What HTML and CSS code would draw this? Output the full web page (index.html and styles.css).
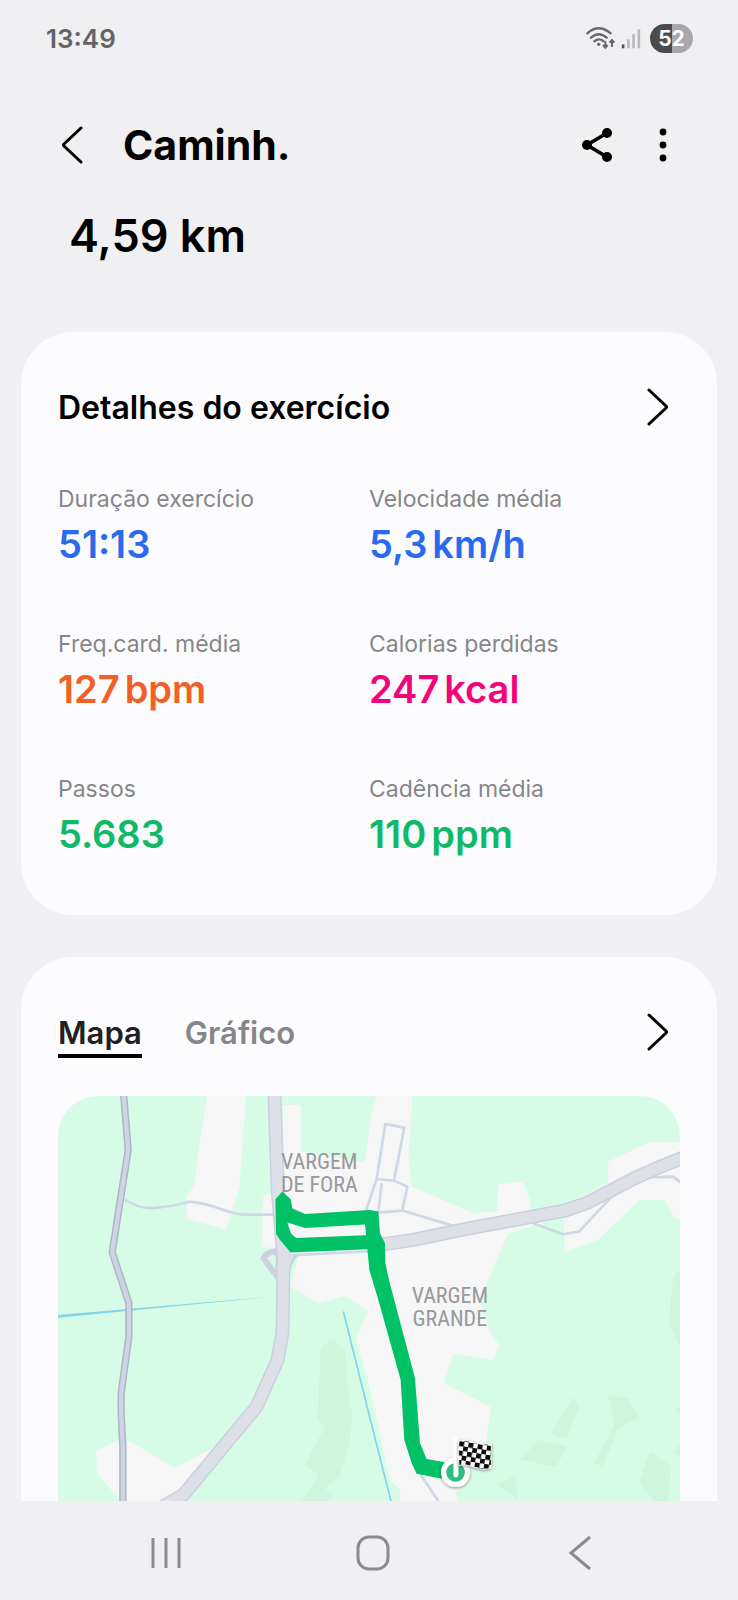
FILE: index.html
```html
<!DOCTYPE html>
<html lang="pt-BR">
<head>
<meta charset="utf-8">
<meta name="viewport" content="width=device-width, initial-scale=1">
<title>Caminh.</title>
<link rel="stylesheet" href="styles.css">
</head>
<body>
<div class="app">
  <div class="status">
    <span class="clock">13:49</span>
    <div class="status-icons">
      <svg class="wifi" viewBox="0 0 90 72" aria-hidden="true">
        <g fill="none" stroke="#69696b" stroke-width="7" stroke-linecap="round">
          <path d="M4 22Q38-8 74 22M15 35Q38 14 62 35M25 46Q38 35 52 45"/>
        </g>
        <circle cx="38" cy="55" r="5" fill="#69696b"/>
        <path d="M58 45V64M51 57L58 65L65 57M78 63V43M71 50L78 42L85 50" fill="none" stroke="#69696b" stroke-width="6"/>
      </svg>
      <svg class="signal" viewBox="0 0 60 64" aria-hidden="true">
        <path d="M6 50V62" stroke="#555557" stroke-width="8"/>
        <path d="M22 34V62M38 19V62M54 4V62" stroke="#b9b9bb" stroke-width="8"/>
      </svg>
      <span class="battery">52</span>
    </div>
  </div>

  <header class="appbar">
    <button class="icon-btn" aria-label="Voltar">
      <svg class="back-icon" viewBox="0 0 22 40" aria-hidden="true"><path d="M20 3L3 19Q2 20 3 21L20 37"/></svg>
    </button>
    <h1 class="title">Caminh.</h1>
    <button class="icon-btn" aria-label="Compartilhar">
      <svg class="share-icon" viewBox="0 0 90 102" aria-hidden="true">
        <path d="M75 15L15 51L75 87" fill="none" stroke="#000" stroke-width="11"/>
        <circle cx="75" cy="15" r="15"/><circle cx="15" cy="51" r="15"/><circle cx="75" cy="87" r="15"/>
      </svg>
    </button>
    <button class="icon-btn" aria-label="Mais opções">
      <svg class="more-icon" viewBox="0 0 8 34" aria-hidden="true"><circle cx="4" cy="4" r="3.4"/><circle cx="4" cy="17" r="3.4"/><circle cx="4" cy="30" r="3.4"/></svg>
    </button>
  </header>

  <p class="distance">4,59 km</p>

  <main class="cards">
    <section class="card">
      <div class="card-head">
        <h2 class="card-title">Detalhes do exercício</h2>
        <button class="icon-btn" aria-label="Abrir detalhes">
          <svg class="chevron" viewBox="0 0 22 40" aria-hidden="true"><path d="M2 3L19 19Q20 20 19 21L2 37"/></svg>
        </button>
      </div>
      <dl class="stats">
        <div class="stat"><dt>Duração exercício</dt><dd class="blue">51:13</dd></div>
        <div class="stat"><dt>Velocidade média</dt><dd class="blue">5,3<span class="unit">km/h</span></dd></div>
        <div class="stat"><dt>Freq.card. média</dt><dd class="orange">127<span class="unit">bpm</span></dd></div>
        <div class="stat"><dt>Calorias perdidas</dt><dd class="pink">247<span class="unit">kcal</span></dd></div>
        <div class="stat"><dt>Passos</dt><dd class="green">5.683</dd></div>
        <div class="stat"><dt>Cadência média</dt><dd class="green">110<span class="unit">ppm</span></dd></div>
      </dl>
    </section>

    <section class="card card-map">
      <div class="card-head">
        <div class="tabs" role="tablist">
          <button class="tab tab-active" role="tab" aria-selected="true">Mapa</button>
          <button class="tab" role="tab" aria-selected="false">Gráfico</button>
        </div>
        <button class="icon-btn" aria-label="Abrir mapa">
          <svg class="chevron" viewBox="0 0 22 40" aria-hidden="true"><path d="M2 3L19 19Q20 20 19 21L2 37"/></svg>
        </button>
      </div>
      <div class="map">
        <svg class="map-art" viewBox="21 18 1872 1216" preserveAspectRatio="xMidYMin slice" role="img" aria-label="Mapa do percurso">
          <defs>
            <pattern id="checks" width="28" height="28" patternUnits="userSpaceOnUse" patternTransform="translate(1229 1054) rotate(9)">
              <rect width="28" height="28" fill="#fff"/>
              <rect width="15" height="15" fill="#0a0a0a"/><rect x="14" y="14" width="15" height="15" fill="#0a0a0a"/>
            </pattern>
            <filter id="shade" x="-30%" y="-30%" width="160%" height="160%"><feDropShadow dx="0" dy="3" stdDeviation="4" flood-opacity=".45"/></filter>
          </defs>
          <rect x="21" y="18" width="1872" height="1216" fill="#d6fce7"/>
          <g fill="#cff6dd">
            <path d="M812 770L850 748L885 780L890 880L908 980L900 1050L870 1160L825 1195L850 1220L830 1234H755L805 1155L765 1125L825 1010L803 990Z"/>
            <path d="M1570 920L1588 950L1550 1048L1500 1032ZM1675 920L1735 922L1768 985L1705 1015L1660 1130L1632 1120L1695 1005ZM1465 1050L1552 1068L1520 1132L1410 1110ZM1800 1085L1865 1130L1855 1234H1812L1768 1180ZM1340 1185L1395 1160L1402 1228ZM1893 540L1870 560L1862 650L1858 710L1893 770ZM1893 950L1872 957L1893 975ZM1893 1060L1870 1090L1893 1105Z"/>
          </g>
          <g fill="#f6f6f6">
            <path d="M470 18H588L568 290L528 418L408 386L410 318L430 290Z"/>
            <path d="M698 45H752V185L945 218L960 100L970 50L980 18H1088L1075 200L1085 290L1270 370L1342 365L1345 282L1418 275L1442 330L1438 366L1545 345L1675 280V215L1800 157H1893V392L1875 385L1845 330H1768L1645 450L1545 485L1540 375L1440 412L1375 432L1305 590L1290 640L1320 725L1350 765L1330 810L1208 793L1182 880L1322 952L1310 1050L1260 1150L1218 1210L1222 1234H1052L1050 1200L1020 1170L960 900L918 745L955 665L885 618L805 640L720 590L745 500L690 480L636 470L640 315L668 310L700 300Z"/>
            <path d="M138 1085L205 1050L240 1055L375 1135L485 1076L440 1190L370 1234H210L140 1150Z"/>
          </g>
          <g fill="none" stroke="#80d4e6" stroke-width="5"><path d="M880 665L960 986L1023 1234"/></g>
          <path d="M22 676L672 620L22 684Z" fill="#80d4e6"/>
          <g fill="none" stroke="#ced8e6" stroke-width="8" stroke-linejoin="round">
            <path d="M222 328Q265 358 315 354T415 336C480 334 530 374 580 374H680"/>
            <path d="M1006 102L1063 113L1032 272L980 268ZM980 268L945 370M995 280L985 368L1057 362L1072 290L1032 272M1057 362L1210 408M1450 400L1540 433L1588 425L1695 310M1795 262L1870 260L1897 280M1112 1155L1165 1234"/>
            <path d="M730 496L960 484"/>
          </g>
          <path d="M220 10L234 180L212 320L186 487L236 640V740L213 910V970L218 1075V1240" fill="none" stroke="#aeb5c7" stroke-width="22" stroke-linejoin="round"/>
          <path d="M220 10L234 180L212 320L186 487L236 640V740L213 910V970L218 1075V1240" fill="none" stroke="#ccd6e2" stroke-width="13" stroke-linejoin="round"/>
          <path d="M690 482Q650 485 640 505L690 572" fill="none" stroke="#cdd2de" stroke-width="18"/>
          <g fill="none" stroke="#cbd0de" stroke-width="42" stroke-linejoin="round">
            <path d="M673 10L683 300L700 500L698 700L696 735L682 812L620 950L400 1215L340 1250"/>
            <path d="M1000 463L1090 450L1260 415L1545 362L1610 340L1760 262L1820 235L1900 203"/>
          </g>
          <path d="M672 490L750 494Q722 510 716 570H680Z" fill="#cbd0de"/>
          <g fill="none" stroke="#dde0e7" stroke-width="33" stroke-linejoin="round">
            <path d="M673 10L683 300L700 500L698 700L696 735L682 812L620 950L400 1215L340 1250"/>
            <path d="M1000 463L1090 450L1260 415L1545 362L1610 340L1760 262L1820 235L1900 203"/>
          </g>
          <path d="M690 490L735 496Q715 515 712 570H685Z" fill="#dde0e7"/>
          <path d="M666 507L677 495V522Z" fill="#d6fce7"/>
          <path fill="#00c165" fill-rule="evenodd" d="M697 305L722 328L727 356L765 372L960 360L985 365L990 430L1005 460L1006 520L1018 575L1095 865L1110 1060L1130 1108L1185 1118L1180 1168L1100 1152L1085 1120L1063 1050L1052 870L988 640L958 540L952 478L722 488L690 450L678 432L676 328ZM712 398L722 430L738 444L948 436L945 404L765 414Z"/>
          <circle cx="1217" cy="1148" r="44" fill="#fff" filter="url(#shade)"/>
          <circle cx="1217" cy="1148" r="28" fill="#2dbd7c"/>
          <path d="M1218 1052V1156" stroke="#fff" stroke-width="15" stroke-linecap="round"/>
          <path d="M1226 1053Q1250 1052 1275 1060T1324 1061V1136Q1300 1143 1272 1132T1227 1128Z" fill="url(#checks)" stroke="#fff" stroke-width="2" filter="url(#shade)"/>
        </svg>
        <span class="place place-fora">VARGEM<br>DE FORA</span>
        <span class="place place-grande">VARGEM<br>GRANDE</span>
      </div>
    </section>
  </main>

  <nav class="navbar" aria-label="Navegação do sistema">
    <button class="nav-btn" aria-label="Recentes"><svg viewBox="0 0 36 36" aria-hidden="true"><path d="M5 3V33M18 3V33M31 3V33"/></svg></button>
    <button class="nav-btn" aria-label="Início"><svg viewBox="0 0 36 36" aria-hidden="true"><rect x="3" y="2" width="30" height="32" rx="11"/></svg></button>
    <button class="nav-btn" aria-label="Voltar"><svg viewBox="0 0 36 36" aria-hidden="true"><path d="M28 2L9 18L28 34"/></svg></button>
  </nav>
</div>
</body>
</html>
```
FILE: styles.css
```css
* { box-sizing: border-box; }

body {
  margin: 0;
  background: #f0f0f2;
  color: #000;
  font-family: Inter, "Open Sans", sans-serif;
}

h1, h2, p, dl, dd { margin: 0; }

button {
  margin: 0;
  padding: 0;
  border: 0;
  background: none;
  color: inherit;
  font: inherit;
}

svg { display: block; }

.app {
  display: flex;
  flex-direction: column;
  height: 100vh;
  min-height: 1400px;
}

.status {
  display: flex;
  align-items: center;
  justify-content: space-between;
  height: 76px;
  padding: 0 45px 0 46px;
}

.clock {
  color: #646466;
  font-size: 26px;
  font-weight: 600;
}

.status-icons {
  display: flex;
  align-items: center;
  gap: 9px;
}

.wifi { width: 30px; height: 24px; }
.signal { width: 20px; height: 21px; }
.wifi + .signal { margin-left: -4px; }

.battery {
  width: 43px;
  height: 29px;
  border-radius: 15px;
  background: linear-gradient(90deg, #4b4b4d 52%, #a8a8aa 52%);
  color: #fff;
  font-size: 21px;
  font-weight: 700;
  line-height: 29px;
  text-align: center;
}

.appbar {
  display: flex;
  align-items: center;
  height: 138px;
  padding: 0 53px 0 50px;
}

.icon-btn {
  display: grid;
  place-items: center;
  width: 44px;
  height: 48px;
}

.back-icon, .chevron {
  width: 22px;
  height: 40px;
  fill: none;
  stroke: #000;
  stroke-width: 3;
  stroke-linecap: round;
}

.share-icon { width: 30px; height: 34px; }
.more-icon { width: 8px; height: 34px; }

.title {
  flex: 1;
  padding-left: 29px;
  font-size: 41px;
  font-weight: 700;
}

.appbar .icon-btn + .icon-btn { margin-left: 22px; }

.distance {
  padding-left: 69px;
  font-size: 45px;
  font-weight: 600;
  line-height: 44px;
}

.cards {
  display: flex;
  flex: 1;
  flex-direction: column;
  gap: 42px;
  min-height: 0;
  padding: 74px 21px 0;
}

.card {
  padding: 49px 37px 46px;
  border-radius: 52px;
  background: #fcfcfe;
}

.card-head {
  display: flex;
  align-items: center;
  justify-content: space-between;
  height: 52px;
}

.card-title {
  font-size: 32px;
  font-weight: 600;
}

.stats {
  display: grid;
  grid-template-columns: 1fr 1fr;
  padding-top: 49px;
}

.stat { height: 145px; }
.stat:nth-last-child(-n+2) { height: 97px; }

.stat dt {
  color: #868688;
  font-size: 23px;
  line-height: 34px;
}

.stat dd {
  font-size: 38px;
  font-weight: 600;
  line-height: 56px;
}

.unit { margin-left: 5px; }
.blue { color: #2a6af0; }
.orange { color: #f06028; }
.pink { color: #f4047c; }
.green { color: #10b968; }

.card-map {
  display: flex;
  flex: 1;
  flex-direction: column;
  min-height: 0;
  padding-bottom: 0;
  border-radius: 52px 52px 0 0;
}

.tabs {
  display: flex;
  gap: 43px;
}

.tab {
  padding-top: 6px;
  border-bottom: 4px solid transparent;
  color: #868688;
  font-size: 31px;
  font-weight: 600;
  line-height: 42px;
}

.tab-active {
  border-color: #000;
  color: #202022;
}

.map {
  position: relative;
  flex: 1;
  min-height: 0;
  margin-top: 38px;
  overflow: hidden;
  border-radius: 40px 40px 0 0;
}

.map-art { width: 100%; height: 100%; }

.place {
  position: absolute;
  transform: translate(-50%, -50%);
  color: #97999b;
  font-family: "Roboto Condensed", Roboto, sans-serif;
  font-size: 22px;
  line-height: 23px;
  text-align: center;
  white-space: nowrap;
}

.place-fora { left: 42%; top: 19%; }
.place-grande { left: 63%; top: 52%; }

.navbar {
  display: grid;
  grid-template-columns: repeat(3, 1fr);
  height: 99px;
  padding: 4px 55px 0 63px;
}

.nav-btn {
  display: grid;
  place-items: center;
}

.nav-btn svg {
  width: 36px;
  height: 36px;
  fill: none;
  stroke: #8b8b8d;
  stroke-width: 3;
}
```
